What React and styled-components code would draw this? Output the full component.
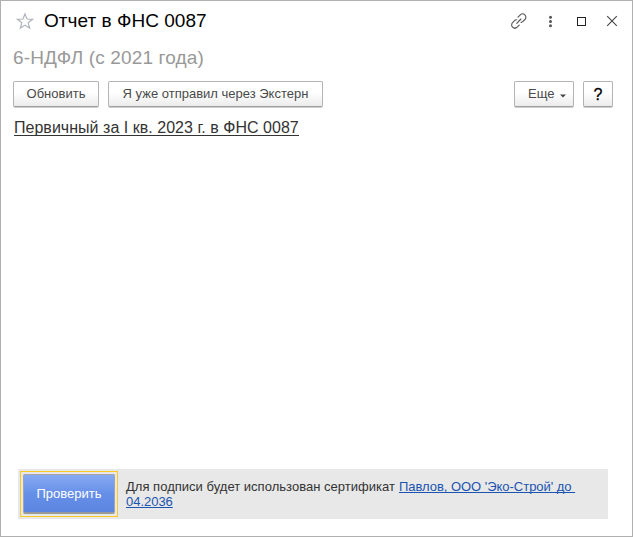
import React from "react";
import styled, { createGlobalStyle } from "styled-components";

const GlobalStyle = createGlobalStyle`
  * { box-sizing: border-box; }
  body { margin: 0; background: #fff; overflow: hidden; }
  button { font-family: inherit; margin: 0; }
`;

const Window = styled.main`
  display: flex;
  flex-direction: column;
  width: 633px;
  height: 537px;
  border: 1px solid #b0b0b0;
  background: #fff;
  color: #333;
  font-family: "Liberation Sans", Arial, sans-serif;
  font-size: 13px;
`;

const TitleBar = styled.header`
  display: flex;
  align-items: center;
  height: 40px;
  padding: 0 11px 0 15px;
`;

const Title = styled.h1`
  flex: 1;
  margin: 0 0 0 10px;
  color: #000;
  font-size: 19px;
  font-weight: 400;
  letter-spacing: 0.03px;
  line-height: 22px;
  white-space: nowrap;
`;

const WindowControls = styled.div`
  display: flex;
  align-items: center;
  gap: 13px;
`;

const IconButton = styled.button`
  display: flex;
  padding: 0;
  border: 0;
  background: none;
`;

const Subtitle = styled.h2`
  height: 40px;
  margin: 0;
  padding: 6px 12px 0;
  color: #999;
  font-size: 19px;
  font-weight: 400;
  letter-spacing: 0.15px;
  line-height: 22px;
`;

const Toolbar = styled.div`
  display: flex;
  gap: 9px;
  height: 27px;
  padding: 0 19px 0 12px;
`;

const Spacer = styled.div`
  flex: 1;
`;

const Button = styled.button`
  display: flex;
  align-items: center;
  justify-content: center;
  width: ${(p) => p.$width}px;
  height: 26px;
  padding: 0 0 1px;
  border: 1px solid #b4b4b4;
  border-bottom-color: #a0a0a0;
  border-radius: 2px;
  box-shadow: 0 1px 0 #cfcfcf;
  background: linear-gradient(#fff 45%, #ebebeb);
  color: #4a4a4a;
  font-size: 13px;
  line-height: 15px;
  white-space: nowrap;
`;

const MoreButton = styled(Button)`
  justify-content: flex-start;
  gap: 6px;
  padding-left: 13px;

  svg { margin-top: 4px; }
`;

const HelpButton = styled(Button)`
  padding: 1px 0 0;
  color: #000;
  font-size: 16px;
  -webkit-text-stroke: 0.3px #000;
`;

const ReportLink = styled.a`
  align-self: flex-start;
  height: 16px;
  margin: 12px 0 0 13px;
  border-bottom: 1px solid #333;
  color: #333;
  font-size: 16px;
  letter-spacing: 0.025px;
  line-height: 16px;
`;

const Footer = styled.footer`
  display: flex;
  width: 590px;
  height: 50px;
  margin: auto 0 17px 17px;
  padding: 2px;
  background: #e8e8e8;
`;

const FocusFrame = styled.div`
  width: 98px;
  height: 46px;
  padding: 2px;
  border: 1px solid #fbc927;
`;

const PrimaryButton = styled.button`
  display: block;
  width: 92px;
  height: 40px;
  padding: 0;
  border: 1px solid #a5a5a5;
  border-bottom: 2px solid #999;
  border-radius: 2px;
  background: linear-gradient(#86aaf1, #668fe8 50%, #5b86de);
  color: #fff;
  font-size: 13px;
`;

const Certificate = styled.div`
  display: flex;
  flex-direction: column;
  align-items: flex-start;
  margin: 8px 0 0 8px;
  line-height: 15px;
`;

const CertificateLine = styled.div`
  display: flex;
  gap: 4px;
  white-space: pre;
`;

const CertificateText = styled.span`
  letter-spacing: 0.02px;
`;

const CertificateLink = styled.a`
  color: #1a54b0;
  letter-spacing: -0.03px;
  text-decoration: underline;
  text-underline-offset: 1px;
  text-decoration-thickness: 1px;
  text-decoration-skip-ink: none;
`;

const StarIcon = () => (
  <svg width="18" height="18" viewBox="0 0 18 18" fill="none" stroke="#aeb4bb" strokeWidth="1.2">
    <path d="M9 1.9l2 5.1 5.6.3-4.4 3.5 1.5 5.3L9 13.1l-4.7 3 1.5-5.3L1.4 7.3 7 7z" />
  </svg>
);

const LinkIcon = () => (
  <svg width="18" height="18" viewBox="0 0 18 18" fill="none" stroke="#555" strokeWidth="1.1" strokeLinecap="round">
    <path d="M8 5.2l2.3-2.3a3.2 3.2 0 0 1 4.6 4.6l-2.2 2.2q-.8.8-1.8.6" />
    <path d="M9.2 13.2l-2 2a3.2 3.2 0 0 1-4.6-4.6l2.2-2.2q.8-.8 1.8-.6" />
    <path d="M6.8 11.3l4.1-4.3" />
  </svg>
);

const MoreIcon = () => (
  <svg width="18" height="18" viewBox="0 0 18 18" fill="#555">
    <circle cx="9.5" cy="5.2" r="1.5" />
    <circle cx="9.5" cy="9.5" r="1.5" />
    <circle cx="9.5" cy="13.8" r="1.5" />
  </svg>
);

const MaximizeIcon = () => (
  <svg width="18" height="18" viewBox="0 0 18 18" fill="none" stroke="#222">
    <rect x="5.5" y="5.5" width="8" height="8" />
  </svg>
);

const CloseIcon = () => (
  <svg width="18" height="18" viewBox="0 0 18 18" stroke="#444" strokeWidth="1.1">
    <path d="M4.2 4.2l9.6 9.6M13.8 4.2l-9.6 9.6" />
  </svg>
);

const CaretIcon = () => (
  <svg width="6" height="4" viewBox="0 0 6 4" fill="#444">
    <path d="M0 .5h6L3 3.5z" />
  </svg>
);

export default function App() {
  return (
    <>
      <GlobalStyle />
      <Window>
        <TitleBar>
          <IconButton aria-label="Избранное"><StarIcon /></IconButton>
          <Title>Отчет в ФНС 0087</Title>
          <WindowControls>
            <IconButton aria-label="Ссылка"><LinkIcon /></IconButton>
            <IconButton aria-label="Меню"><MoreIcon /></IconButton>
            <IconButton aria-label="Развернуть"><MaximizeIcon /></IconButton>
            <IconButton aria-label="Закрыть"><CloseIcon /></IconButton>
          </WindowControls>
        </TitleBar>
        <Subtitle>6-НДФЛ (с 2021 года)</Subtitle>
        <Toolbar>
          <Button $width={86}>Обновить</Button>
          <Button $width={215}>Я уже отправил через Экстерн</Button>
          <Spacer />
          <MoreButton $width={60}>Еще <CaretIcon /></MoreButton>
          <HelpButton $width={30}>?</HelpButton>
        </Toolbar>
        <ReportLink>Первичный за I кв. 2023 г. в ФНС 0087</ReportLink>
        <Footer>
          <FocusFrame>
            <PrimaryButton>Проверить</PrimaryButton>
          </FocusFrame>
          <Certificate>
            <CertificateLine>
              <CertificateText>Для подписи будет использован сертификат</CertificateText>
              <CertificateLink>{"Павлов, ООО 'Эко-Строй' до "}</CertificateLink>
            </CertificateLine>
            <CertificateLink>04.2036</CertificateLink>
          </Certificate>
        </Footer>
      </Window>
    </>
  );
}
